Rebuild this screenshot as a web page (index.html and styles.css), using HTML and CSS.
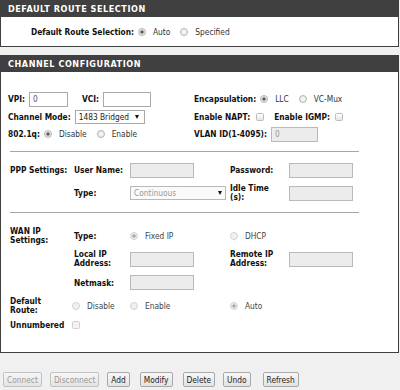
FILE: index.html
```html
<!DOCTYPE html>
<html>
    <head>
        <title>WAN channel configuration</title>
        <link rel="stylesheet" href="styles.css">
    </head>
    <body>
        <div class="box">
            <div class="box-head">DEFAULT ROUTE SELECTION</div>
            <div class="route-row">
                <span class="lbl route-lbl">Default Route Selection:</span>
                <label class="opt first-opt"><input type="radio" class="radio" name="droute" checked>Auto</label>
                <label class="opt"><input type="radio" class="radio" name="droute">Specified</label>
            </div>
        </div>

        <div class="box">
            <div class="box-head">CHANNEL CONFIGURATION</div>
            <div class="chan-top">
                <div class="cell">
                    <span class="lbl">VPI:</span>
                    <input type="text" class="txt in w39" value="0">
                    <span class="lbl vci-lbl">VCI:</span>
                    <input type="text" class="txt in w48" value="">
                </div>
                <div class="cell">
                    <span class="lbl">Encapsulation:</span>
                    <label class="opt first-opt"><input type="radio" class="radio" name="encap" checked>LLC</label>
                    <label class="opt"><input type="radio" class="radio" name="encap">VC-Mux</label>
                </div>
                <div class="cell">
                    <span class="lbl">Channel Mode:</span>
                    <span class="sel in w70">1483 Bridged</span>
                </div>
                <div class="cell">
                    <span class="lbl">Enable NAPT:</span>
                    <input type="checkbox" class="chk chk-napt">
                    <span class="lbl igmp-lbl">Enable IGMP:</span>
                    <input type="checkbox" class="chk">
                </div>
                <div class="cell">
                    <span class="lbl">802.1q:</span>
                    <label class="opt first-opt"><input type="radio" class="radio" name="vlan" checked>Disable</label>
                    <label class="opt"><input type="radio" class="radio" name="vlan">Enable</label>
                </div>
                <div class="cell">
                    <span class="lbl">VLAN ID(1-4095):</span>
                    <input type="text" class="txt in w47" value="0" disabled>
                </div>
            </div>

            <div class="sep"></div>

            <div class="grid5 ppp">
                <span class="lbl">PPP Settings:</span>
                <span class="lbl">User Name:</span>
                <span><input type="text" class="txt w64" disabled></span>
                <span class="lbl">Password:</span>
                <span><input type="text" class="txt w64" disabled></span>

                <span></span>
                <span class="lbl">Type:</span>
                <span><span class="sel w96 off">Continuous</span></span>
                <span class="lbl two">Idle Time<br>(s):</span>
                <span><input type="text" class="txt w64" disabled></span>
            </div>

            <div class="sep"></div>

            <div class="grid5 wan">
                <span class="lbl two">WAN IP<br>Settings:</span>
                <span class="lbl">Type:</span>
                <label class="opt"><input type="radio" class="radio" name="wantype" checked disabled>Fixed IP</label>
                <label class="opt"><input type="radio" class="radio" name="wantype" disabled>DHCP</label>
                <span></span>

                <span></span>
                <span class="lbl two">Local IP<br>Address:</span>
                <span><input type="text" class="txt w64" disabled></span>
                <span class="lbl two">Remote IP<br>Address:</span>
                <span><input type="text" class="txt w64" disabled></span>

                <span></span>
                <span class="lbl">Netmask:</span>
                <span><input type="text" class="txt w64" disabled></span>
                <span></span>
                <span></span>

                <span class="lbl two">Default<br>Route:</span>
                <label class="opt opt-pull"><input type="radio" class="radio" name="wroute" disabled>Disable</label>
                <label class="opt"><input type="radio" class="radio" name="wroute" disabled>Enable</label>
                <label class="opt"><input type="radio" class="radio" name="wroute" checked disabled>Auto</label>
                <span></span>

                <span class="lbl">Unnumbered</span>
                <span><input type="checkbox" class="chk opt-pull" disabled></span>
                <span></span>
                <span></span>
                <span></span>
            </div>
        </div>

        <div class="btns">
            <button disabled>Connect</button>
            <button disabled>Disconnect</button>
            <button>Add</button>
            <button class="wide-gap">Modify</button>
            <button class="wide-gap">Delete</button>
            <button>Undo</button>
            <button class="wider-gap">Refresh</button>
        </div>
    </body>
</html>
```

FILE: styles.css
```css
body {
    margin: 0;
    background: #f0f0f0;
    font-family: "DejaVu Sans Condensed", "DejaVu Sans", sans-serif;
    font-stretch: condensed;
    font-size: 8.3px;
    color: #333;
}
.box {
    width: 399px;
    box-sizing: border-box;
    border: 1px solid #404040;
    background: #fff;
}
.box + .box {
    margin-top: 8px;
}
.box-head {
    height: 16px;
    line-height: 16px;
    padding-left: 7px;
    background: #404040;
    color: #fff;
    font-weight: bold;
    font-size: 9px;
    letter-spacing: 0.55px;
}
.lbl {
    font-weight: bold;
    color: #111;
    white-space: nowrap;
}
.lbl.two {
    line-height: 9px;
}

/* default route box */
.route-row {
    display: flex;
    align-items: center;
    height: 29px;
}
.route-lbl {
    width: 126px;
    padding-left: 7px;
    text-align: right;
}
.route-row .first-opt {
    margin-left: 9px;
}

/* options */
.opt {
    display: flex;
    align-items: center;
    margin-left: 10px;
    white-space: nowrap;
}
.opt.first-opt {
    margin-left: 4px;
}
.grid5 .opt {
    margin-left: 0;
}
.grid5 .opt-pull {
    margin-left: -2px;
}
.radio {
    appearance: none;
    -webkit-appearance: none;
    box-sizing: border-box;
    width: 8px;
    height: 8px;
    margin: 0 7px 0 0;
    border: 1px solid #b4b4b4;
    border-radius: 50%;
    background: radial-gradient(circle, #fafafa 0, #e2e2e2 100%);
}
.radio:checked {
    background: radial-gradient(circle, #555 0, #666 1.3px, #e4e4e4 2px, #e4e4e4 100%);
}
.radio:disabled {
    border-color: #d2d2d2;
    background: #f0f0f0;
}
.radio:checked:disabled {
    background: radial-gradient(circle, #a8a8a8 0, #a8a8a8 1.3px, #ececec 2px, #ececec 100%);
}
.chk {
    appearance: none;
    -webkit-appearance: none;
    box-sizing: border-box;
    width: 8px;
    height: 8px;
    margin: 0 0 0 5px;
    border: 1px solid #bcbcbc;
    border-radius: 1.5px;
    background: linear-gradient(#fdfdfd, #e6e6e6);
}
.chk:disabled {
    border-color: #d0d0d0;
    background: #f2f2f2;
}
.chk-napt {
    margin-left: 6px;
}
.igmp-lbl {
    margin-left: 10px;
}

/* channel top block */
.chan-top {
    display: grid;
    grid-template-columns: 186px 1fr;
    grid-template-rows: 18px 18px 16px;
    padding: 18px 0 9px 7px;
}
.cell {
    display: flex;
    align-items: center;
}
.in {
    margin-left: 4px;
}
.vci-lbl {
    margin-left: 14px;
}
.txt {
    box-sizing: border-box;
    height: 15px;
    margin-top: 0;
    margin-bottom: 0;
    padding: 0 3px;
    border: 1px solid #a9a9a9;
    font: inherit;
    color: #555;
    background: #fff;
}
.txt:disabled {
    border-color: #b9b9b9;
    background: #ececec;
    color: #999;
}
.w39 { width: 39px; }
.w47 { width: 47px; }
.w48 { width: 48px; }
.w64 { width: 64px; }
.w70 { width: 70px; }
.w96 { width: 96px; }

.sel {
    position: relative;
    display: inline-block;
    box-sizing: border-box;
    height: 14px;
    line-height: 12px;
    padding-left: 3px;
    border: 1px solid #a9a9a9;
    background: #fff;
    color: #222;
    vertical-align: middle;
}
.sel::after {
    content: "";
    position: absolute;
    right: 5px;
    top: 4px;
    border-left: 2.5px solid transparent;
    border-right: 2.5px solid transparent;
    border-top: 4px solid #111;
}
.sel.off {
    border-color: #b9b9b9;
    background: #fafafa;
    color: #999;
}
.sel.off::after {
    right: 3px;
}

.sep {
    height: 1px;
    margin: 0 39px 0 9px;
    background: #a6a6a6;
}

/* table-like sections */
.grid5 {
    display: grid;
    grid-template-columns: 64px 56px 100px 59px 1fr;
    align-items: center;
    padding-left: 9px;
}
.grid5 > span {
    display: flex;
    align-items: center;
}
.ppp {
    grid-template-rows: 18px 18px;
    row-gap: 5px;
    padding-top: 9px;
    padding-bottom: 10px;
}
.wan {
    grid-template-rows: 23px 24px 23px 24px 13px;
    padding-top: 11px;
    padding-bottom: 21px;
}
.wan .opt {
    color: #444;
}
.wan .chk {
    margin-left: -2px;
}

/* buttons */
.btns {
    display: flex;
    padding: 19px 0 0 3px;
}
.btns button {
    height: 15px;
    margin-right: 8px;
    padding: 0 3px;
    border: 1px solid #a8a8a8;
    border-radius: 2px;
    background: linear-gradient(#f7f7f7, #e3e3e3);
    font: inherit;
    color: #222;
}
.btns button:disabled {
    color: #9a9a9a;
    border-color: #c2c2c2;
}
.btns button.wide-gap {
    margin-left: 2px;
}
.btns button.wider-gap {
    margin-left: 4px;
}
```
